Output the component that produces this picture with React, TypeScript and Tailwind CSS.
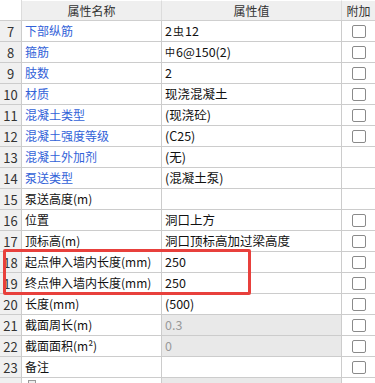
import React from "react";

type Row = {
  n: number;
  name: string;
  value: React.ReactNode;
  blue?: boolean;
  check?: boolean;
  disabled?: boolean;
};

const sym = (c: string, raised?: boolean) => (
  <span className={raised ? "text-[10px] align-[3px] mr-[1px]" : "text-[11px] align-[1px] mx-[1px]"}>{c}</span>
);

const rows: Row[] = [
  { n: 7, name: "下部纵筋", value: <>2{sym("虫")}12</>, blue: true, check: true },
  { n: 8, name: "箍筋", value: <>{sym("中", true)}6@150(2)</>, blue: true, check: true },
  { n: 9, name: "肢数", value: "2", blue: true, check: true },
  { n: 10, name: "材质", value: "现浇混凝土", blue: true, check: true },
  { n: 11, name: "混凝土类型", value: "(现浇砼)", blue: true, check: true },
  { n: 12, name: "混凝土强度等级", value: "(C25)", blue: true, check: true },
  { n: 13, name: "混凝土外加剂", value: "(无)", blue: true },
  { n: 14, name: "泵送类型", value: "(混凝土泵)", blue: true },
  { n: 15, name: "泵送高度(m)", value: "" },
  { n: 16, name: "位置", value: "洞口上方", check: true },
  { n: 17, name: "顶标高(m)", value: "洞口顶标高加过梁高度", check: true },
  { n: 18, name: "起点伸入墙内长度(mm)", value: "250", check: true },
  { n: 19, name: "终点伸入墙内长度(mm)", value: "250", check: true },
  { n: 20, name: "长度(mm)", value: "(500)", check: true },
  { n: 21, name: "截面周长(m)", value: "0.3", check: true, disabled: true },
  { n: 22, name: "截面面积(m²)", value: "0", check: true, disabled: true },
  { n: 23, name: "备注", value: "", check: true },
];

function Checkbox() {
  return <div className="w-[14px] h-[13px] rounded-[2px] border border-[#8a8a8a] bg-white" />;
}

export default function App() {
  return (
    <div
      className="relative w-[375px] h-[383px] overflow-hidden bg-white text-[12px] leading-none"
      style={{ fontFamily: '"Noto Sans CJK SC", "Noto Sans", sans-serif' }}
    >
      {/* header */}
      <div className="flex h-[21px] border-b border-[#cfcfcf] text-[#333]">
        <div className="w-[22px] bg-white border-r border-[#dcdcdc]" />
        <div className="w-[140px] bg-[#efefef] border-r border-[#dcdcdc] border-t border-t-white flex items-center justify-center">
          属性名称
        </div>
        <div className="w-[180px] bg-[#efefef] border-r border-[#dcdcdc] border-t border-t-white flex items-center justify-center">
          属性值
        </div>
        <div className="flex-1 bg-[#efefef] border-t border-t-white flex items-center justify-center">
          附加
        </div>
      </div>
      {rows.map((r) => (
        <div key={r.n} className="flex h-[21px] border-b border-[#cccccc]">
          <div className="w-[22px] shrink-0 bg-[#f0f0f0] border-r border-[#cccccc] flex items-center justify-center text-[#333] text-[13px]">
            {r.n}
          </div>
          <div
            className={`w-[140px] shrink-0 border-r border-[#cccccc] flex items-center pl-[3px] whitespace-nowrap ${
              r.blue ? "text-[#3262d8]" : "text-[#111]"
            }`}
          >
            {r.name}
          </div>
          <div
            className={`w-[180px] shrink-0 border-r border-[#cccccc] flex items-center pl-[3px] whitespace-nowrap text-[12.5px] ${
              r.disabled ? "bg-[#e9e9e9] text-[#9a9a9a]" : "text-[#111]"
            }`}
          >
            {r.value}
          </div>
          <div className="flex-1 flex items-center justify-center">{r.check && <Checkbox />}</div>
        </div>
      ))}
      {/* partial row 24 */}
      <div className="flex h-[21px]">
        <div className="w-[22px] shrink-0 bg-[#f0f0f0] border-r border-[#cccccc]" />
        <div className="w-[140px] shrink-0 border-r border-[#cccccc] pl-[6px] pt-[2px]">
          <div className="w-[8px] h-[8px] border border-[#999] bg-[#eee]" />
        </div>
        <div className="w-[180px] shrink-0 border-r border-[#cccccc] bg-[#e9e9e9]" />
        <div className="flex-1" />
      </div>
      {/* red annotation box */}
      <div className="absolute left-[3px] top-[249px] w-[248px] h-[46px] border-[3px] border-[#e8403c] rounded-[2px]" />
    </div>
  );
}
